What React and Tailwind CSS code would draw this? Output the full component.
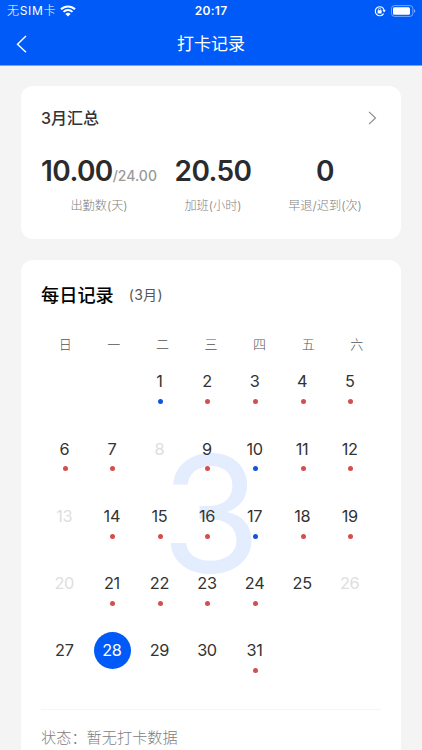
import React from 'react'
import clsx from 'clsx'

const weekdays = ['日', '一', '二', '三', '四', '五', '六']

const blueDays = [1, 10, 17]
const redDays = [2, 3, 4, 5, 6, 7, 9, 11, 12, 14, 15, 16, 18, 19, 21, 22, 23, 24, 31]
const mutedDays = [8, 13, 20, 26]
const selectedDay = 28

// March starts on a Tuesday
const cells = [null, null, ...Array.from({ length: 31 }, (_, i) => i + 1)]

function StatusBar() {
  return (
    <div className="grid h-[22px] grid-cols-3 items-center px-[7px] text-[12px] leading-none">
      <div className="flex items-center">
        <span className="tracking-[0.7px]">
          <span className="font-light">无</span>SIM<span className="font-light">卡</span>
        </span>
        <svg className="ml-[4px]" width="16" height="12" viewBox="0 0 16 12" fill="none">
          <path d="M1 4.3a10 10 0 0 1 14 0" stroke="white" strokeWidth="2.1" />
          <path d="M3.5 6.9a6.4 6.4 0 0 1 9 0" stroke="white" strokeWidth="2" />
          <path d="M8 11.6 5.4 9a3.7 3.7 0 0 1 5.2 0Z" fill="white" />
        </svg>
      </div>
      <div className="text-center font-semibold tracking-[0.3px]">20:17</div>
      <div className="flex items-center justify-end">
        <svg width="12" height="12" viewBox="0 0 12 12" fill="none">
          <path d="M9.6 8.6A4.5 4.5 0 1 1 10.1 5" stroke="white" strokeWidth="1.1" />
          <path d="M8.5 5.1h3.2L10.1 7.5Z" fill="white" />
          <rect x="3.6" y="5.3" width="4" height="3.1" rx="0.5" fill="white" />
          <path d="M4.4 5.4v-.8a1.2 1.2 0 0 1 2.4 0v.8" stroke="white" strokeWidth="0.8" />
        </svg>
        <svg className="ml-[5px] -mr-[1px]" width="25" height="12" viewBox="0 0 25 12" fill="none">
          <rect x="0.5" y="0.6" width="21.4" height="10.8" rx="3" stroke="white" strokeOpacity="0.45" />
          <rect x="2" y="2.3" width="17" height="7.4" rx="1.5" fill="white" />
          <path d="M23 4.2v3.6c.8-.3 1.3-1 1.3-1.8s-.5-1.5-1.3-1.8Z" fill="white" fillOpacity="0.5" />
        </svg>
      </div>
    </div>
  )
}

function Stat({ value, total, label }) {
  return (
    <div className="flex flex-col items-center whitespace-nowrap">
      <div className="flex h-[34px] items-baseline leading-[34px]">
        <span className="text-[28px] font-semibold tracking-[-0.6px] text-[#2b2b2d]">{value}</span>
        {total && <span className="text-[14px] font-medium text-[#999]">/{total}</span>}
      </div>
      <div className="mt-[9px] text-[12.2px] leading-[18px] font-light text-[#808080]">{label}</div>
    </div>
  )
}

function Day({ day }) {
  if (!day) return <div />
  const selected = day === selectedDay
  return (
    <div className="flex flex-col items-center">
      <div
        className={clsx(
          'flex size-[37px] items-center justify-center rounded-full pr-px text-[16.3px] font-[370] tracking-[-0.35px]',
          selected && 'bg-[#005af8] text-white',
          !selected && (mutedDays.includes(day) ? 'text-[#dedede]' : 'text-[#333]')
        )}
      >
        {day}
      </div>
      {blueDays.includes(day) && <div className="ml-px -mt-px size-[5px] rounded-full bg-[#0f55df]" />}
      {redDays.includes(day) && <div className="ml-px -mt-px size-[5px] rounded-full bg-[#d24f50]" />}
    </div>
  )
}

export default function App() {
  return (
    <div className="h-[750px] w-full overflow-hidden bg-[#f4f4f4] font-['Inter','Noto_Sans_CJK_SC',sans-serif]">
      <header className="h-[66px] border-b border-[#74a5fb] bg-[#005af8] text-white">
        <StatusBar />
        <div className="grid h-[43px] grid-cols-3 items-center px-[16px]">
          <svg width="12" height="18" viewBox="0 0 12 18" fill="none">
            <path d="M10 1 1.5 9.2 10 17.2" stroke="white" strokeWidth="1.4" />
          </svg>
          <h1 className="text-center text-[17px] leading-6">打卡记录</h1>
        </div>
      </header>

      <main className="flex flex-col gap-[21px] px-[21px] pt-5">
        <section className="h-[153px] rounded-[12px] bg-white px-5 pt-5">
          <div className="flex h-6 items-center justify-between">
            <h2 className="text-[16px] font-medium text-[#333]">3月汇总</h2>
            <svg className="mr-[4px]" width="9" height="14" viewBox="0 0 9 14" fill="none">
              <path d="m1 .8 6.5 6.2L1 13.2" stroke="#888" strokeWidth="1.1" />
            </svg>
          </div>
          <div className="mt-[24px] grid grid-cols-[116px_112px_112px]">
            <Stat value="10.00" total="24.00" label="出勤数(天)" />
            <Stat value="20.50" label="加班(小时)" />
            <Stat value="0" label="早退/迟到(次)" />
          </div>
        </section>

        <section className="h-[510px] rounded-[12px] bg-white px-5 pt-[21px]">
          <div className="flex h-7 items-center">
            <h2 className="text-[18.2px] leading-7 font-medium text-black">每日记录</h2>
            <span className="ml-[15px] text-[14px] leading-7 tracking-[0.3px] text-[#555]">(3月)</span>
          </div>
          <div className="mt-[26px] grid h-5 grid-cols-7 items-center text-center text-[13px] font-light text-[#555]">
            {weekdays.map((w) => (
              <span key={w}>{w}</span>
            ))}
          </div>
          <div className="relative mt-[8px]">
            {/* big month number behind the days */}
            <div className="absolute inset-0 flex items-center justify-center pb-[37px] text-[162px] leading-none text-[#e3edfd]">
              3
            </div>
            <div className="relative grid w-[333px] auto-rows-[67.3px] grid-cols-7">
              {cells.map((day, i) => (
                <Day key={i} day={day} />
              ))}
            </div>
          </div>
          <div className="mt-[10px] border-t border-[#f5f5f5] pt-[16px] text-[15.2px] leading-6 font-light text-[#808080]">
            状态：暂无打卡数据
          </div>
        </section>
      </main>
    </div>
  )
}
